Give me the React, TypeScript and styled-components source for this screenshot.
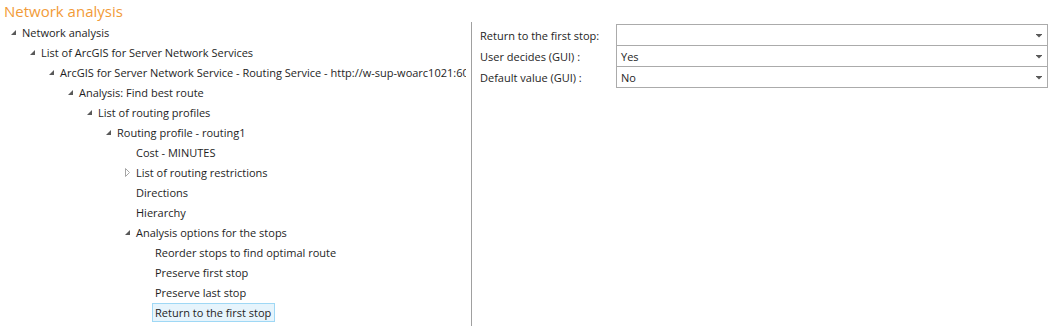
import { Fragment } from "react";
import styled, { createGlobalStyle } from "styled-components";

const Global = createGlobalStyle`
  html, body {
    margin: 0;
    padding: 0;
    background: #ffffff;
  }
  body {
    font-family: "Open Sans", "Noto Sans", sans-serif;
    color: #1e1e1e;
  }
`;

const Page = styled.div`
  width: 1052px;
  height: 326px;
  overflow: hidden;
  display: grid;
  grid-template-rows: 22px 1fr;
`;

const Title = styled.h1`
  margin: 0;
  padding: 0 0 0 4px;
  font-weight: 400;
  font-size: 15px;
  line-height: 22px;
  color: #f29b38;
`;

const Body = styled.div`
  display: grid;
  grid-template-columns: 471px 1fr;
`;

const TreePane = styled.div`
  overflow: hidden;
  padding: 0 5px 0 0;
`;

const Row = styled.div<{ $level: number }>`
  height: 20px;
  display: flex;
  align-items: center;
  padding-left: ${(p) => 4 + p.$level * 19}px;
  white-space: nowrap;
  overflow: hidden;
`;

const Toggle = styled.span`
  width: 18px;
  height: 20px;
  flex: none;
  display: flex;
  align-items: center;
  justify-content: center;
`;

const Label = styled.span<{ $selected?: boolean }>`
  font-size: 11px;
  line-height: 17px;
  padding: 0 3px 0 2px;
  margin-left: -3px;
  border: 1px solid ${(p) => (p.$selected ? "#9fd8f5" : "transparent")};
  background: ${(p) => (p.$selected ? "#e6f4fc" : "transparent")};
`;

const PropPane = styled.div`
  border-left: 1px solid #a0a0a0;
  padding: 2px 0 0 8px;
`;

const PropGrid = styled.div`
  display: grid;
  grid-template-columns: 136px 432px;
  grid-auto-rows: 21px;
`;

const PropLabel = styled.div`
  display: flex;
  align-items: center;
  padding-top: 2px;
  font-size: 11px;
  white-space: nowrap;
`;

const Combo = styled.div`
  box-sizing: border-box;
  height: 22px;
  border: 1px solid #ababab;
  display: flex;
  align-items: center;
  justify-content: space-between;
  padding: 1px 5px 0 4px;
  font-size: 11px;
`;

const Expanded = () => (
  <svg width="7" height="7" viewBox="0 0 7 7">
    <polygon points="6,1 6,6 1,6" fill="#595959" />
  </svg>
);

const Collapsed = () => (
  <svg width="7" height="9" viewBox="0 0 7 9">
    <polygon points="1.5,0.5 5.5,4.5 1.5,8.5" fill="none" stroke="#a6a6a6" />
  </svg>
);

const Arrow = () => (
  <svg width="6" height="4" viewBox="0 0 6 4">
    <rect x="0" y="0" width="6" height="1" fill="#595959" />
    <polygon points="0.5,1 5.5,1 3,3.5" fill="#595959" />
  </svg>
);

type Node = { text: string; level: number; state?: "open" | "closed"; selected?: boolean };

const nodes: Node[] = [
  { text: "Network analysis", level: 0, state: "open" },
  { text: "List of ArcGIS for Server Network Services", level: 1, state: "open" },
  { text: "ArcGIS for Server Network Service - Routing Service - http://w-sup-woarc1021:6080/arcgis/rest/services", level: 2, state: "open" },
  { text: "Analysis: Find best route", level: 3, state: "open" },
  { text: "List of routing profiles", level: 4, state: "open" },
  { text: "Routing profile - routing1", level: 5, state: "open" },
  { text: "Cost - MINUTES", level: 6 },
  { text: "List of routing restrictions", level: 6, state: "closed" },
  { text: "Directions", level: 6 },
  { text: "Hierarchy", level: 6 },
  { text: "Analysis options for the stops", level: 6, state: "open" },
  { text: "Reorder stops to find optimal route", level: 7 },
  { text: "Preserve first stop", level: 7 },
  { text: "Preserve last stop", level: 7 },
  { text: "Return to the first stop", level: 7, selected: true },
];

const props = [
  { label: "Return to the first stop:", value: "" },
  { label: "User decides (GUI) :", value: "Yes" },
  { label: "Default value (GUI) :", value: "No" },
];

export default function App() {
  return (
    <Page>
      <Global />
      <Title>Network analysis</Title>
      <Body>
        <TreePane>
          {nodes.map((n, i) => (
            <Row key={i} $level={n.level}>
              <Toggle>
                {n.state === "open" && <Expanded />}
                {n.state === "closed" && <Collapsed />}
              </Toggle>
              <Label $selected={n.selected}>{n.text}</Label>
            </Row>
          ))}
        </TreePane>
        <PropPane>
          <PropGrid>
            {props.map((p, i) => (
              <Fragment key={i}>
                <PropLabel>{p.label}</PropLabel>
                <Combo>
                  <span>{p.value}</span>
                  <Arrow />
                </Combo>
              </Fragment>
            ))}
          </PropGrid>
        </PropPane>
      </Body>
    </Page>
  );
}
